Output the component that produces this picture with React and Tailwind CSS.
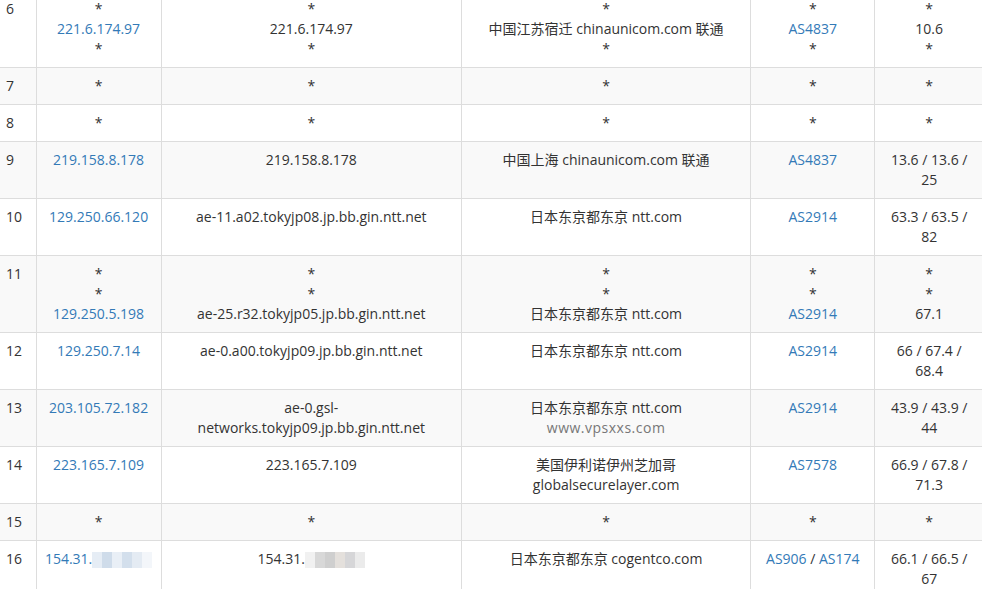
const L = ({ children }) => <span className="text-[#337ab7]">{children}</span>;
const Blur = ({ tone }) => (
  <span className="inline-flex align-middle">
    {(tone === "b"
      ? ["#e6edf5", "#cfdcea", "#e9eff6", "#d3dfec", "#e4ebf3", "#f3f6fa"]
      : ["#f1f1f1", "#d8d8d8", "#cfcfcf", "#e4e0dc", "#d6d6d8", "#ebebeb"]
    ).map((c, i) => (
      <span key={i} className="w-[10px] h-[16px]" style={{ background: c }} />
    ))}
  </span>
);
const rows = [
  ["6", [["*"], [<L>221.6.174.97</L>], ["*"]], [["*"], ["221.6.174.97"], ["*"]], [["*"], ["中国江苏宿迁 chinaunicom.com 联通"], ["*"]], [["*"], [<L>AS4837</L>], ["*"]], [["*"], ["10.6"], ["*"]]],
  ["7", [["*"]], [["*"]], [["*"]], [["*"]], [["*"]]],
  ["8", [["*"]], [["*"]], [["*"]], [["*"]], [["*"]]],
  ["9", [[<L>219.158.8.178</L>]], [["219.158.8.178"]], [["中国上海 chinaunicom.com 联通"]], [[<L>AS4837</L>]], [["13.6 / 13.6 /"], ["25"]]],
  ["10", [[<L>129.250.66.120</L>]], [["ae-11.a02.tokyjp08.jp.bb.gin.ntt.net"]], [["日本东京都东京 ntt.com"]], [[<L>AS2914</L>]], [["63.3 / 63.5 /"], ["82"]]],
  ["11", [["*"], ["*"], [<L>129.250.5.198</L>]], [["*"], ["*"], ["ae-25.r32.tokyjp05.jp.bb.gin.ntt.net"]], [["*"], ["*"], ["日本东京都东京 ntt.com"]], [["*"], ["*"], [<L>AS2914</L>]], [["*"], ["*"], ["67.1"]]],
  ["12", [[<L>129.250.7.14</L>]], [["ae-0.a00.tokyjp09.jp.bb.gin.ntt.net"]], [["日本东京都东京 ntt.com"]], [[<L>AS2914</L>]], [["66 / 67.4 /"], ["68.4"]]],
  ["13", [[<L>203.105.72.182</L>]], [["ae-0.gsl-"], ["networks.tokyjp09.jp.bb.gin.ntt.net"]], [["日本东京都东京 ntt.com"], [<span className="text-[#777] tracking-[0.5px]">www.vpsxxs.com</span>]], [[<L>AS2914</L>]], [["43.9 / 43.9 /"], ["44"]]],
  ["14", [[<L>223.165.7.109</L>]], [["223.165.7.109"]], [["美国伊利诺伊州芝加哥"], ["globalsecurelayer.com"]], [[<L>AS7578</L>]], [["66.9 / 67.8 /"], ["71.3"]]],
  ["15", [["*"]], [["*"]], [["*"]], [["*"]], [["*"]]],
  ["16", [[<L>154.31.<Blur tone="b" /></L>]], [["154.31.", <Blur tone="g" />]], [["日本东京都东京 cogentco.com"]], [[<><L>AS906</L> / <L>AS174</L></>]], [["66.1 / 66.5 /"], ["67"]]],
];
const widths = ["w-[36px]", "w-[125px]", "w-[300px]", "w-[289px]", "w-[124px]", "w-[108px]"];
export default function App() {
  return (
    <div className="w-[982px] h-[589px] overflow-hidden bg-white text-[#333] text-[14px] leading-[20px]" style={{ fontFamily: '"Open Sans","Noto Sans CJK SC",sans-serif' }}>
      <table className="border-collapse table-fixed w-[983px] -mt-[10px]">
        <tbody>
          {rows.map((r, i) => (
            <tr key={i} className={i % 2 ? "bg-[#f9f9f9]" : "bg-white"}>
              <td className={`${widths[0]} border border-[#ddd] border-l-0 px-[6px] py-2 align-top`}>{r[0]}</td>
              {r.slice(1).map((cell, j) => (
                <td key={j} className={`${widths[j + 1]} border border-[#ddd] ${j === 4 ? "border-r-0" : ""} px-2 py-2 text-center align-top`}>
                  {cell.map((line, k) => (
                    <div key={k}>{line}</div>
                  ))}
                </td>
              ))}
            </tr>
          ))}
        </tbody>
      </table>
    </div>
  );
}
